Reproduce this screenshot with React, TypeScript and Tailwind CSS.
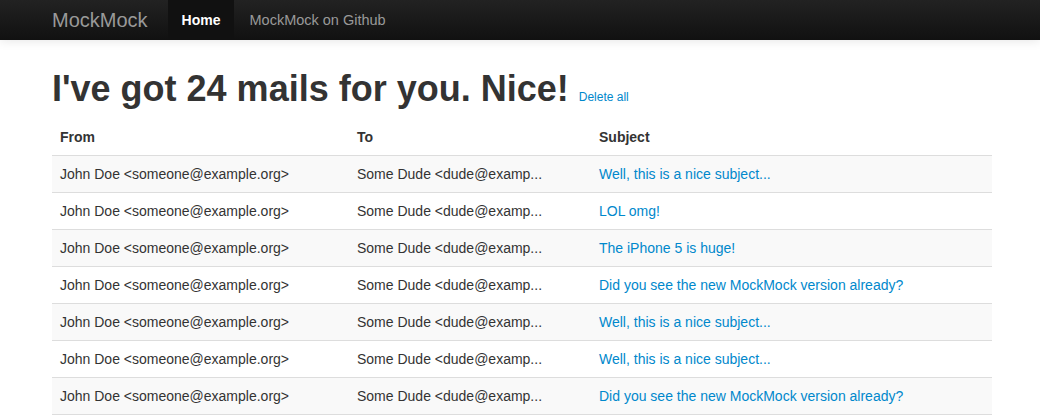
import React from "react";

const mails = [
  "Well, this is a nice subject...",
  "LOL omg!",
  "The iPhone 5 is huge!",
  "Did you see the new MockMock version already?",
  "Well, this is a nice subject...",
  "Well, this is a nice subject...",
  "Did you see the new MockMock version already?",
];

const App = () => {
  return (
    <div className="min-h-screen bg-white text-[14px] leading-5 text-[#333] font-['Liberation_Sans',Arial,sans-serif]">
      <div className="h-10 bg-gradient-to-b from-[#222222] to-[#111111] shadow-[0_1px_10px_rgba(0,0,0,0.1)]">
        <div className="ml-[52px] flex h-10 w-[940px] items-center">
          <a className="-ml-5 px-5 text-[20px] font-light leading-5 text-[#999]">MockMock</a>
          <a className="flex h-10 items-center bg-[#111] px-[14px] text-[14px] font-bold text-white [text-shadow:0_-1px_0_rgba(0,0,0,0.25)]">
            Home
          </a>
          <a className="px-[15px] text-[14.5px] text-[#999]">MockMock on Github</a>
        </div>
      </div>

      <div className="ml-[52px] w-[940px] pt-[29px]">
        <h1 className="mb-[10px] flex items-baseline gap-[10px] text-[36px] font-bold leading-10 text-[#333]">
          I've got 24 mails for you. Nice!
          <a className="text-[12px] font-normal leading-5 text-[#0088cc]">Delete all</a>
        </h1>

        <table className="w-full">
          <thead>
            <tr className="text-left">
              <th className="w-[297px] px-2 py-2 font-bold">From</th>
              <th className="w-[242px] px-2 py-2 font-bold">To</th>
              <th className="px-2 py-2 font-bold">Subject</th>
            </tr>
          </thead>
          <tbody>
            {mails.map((subject, i) => (
              <tr key={i} className={i % 2 === 0 ? "bg-[#f9f9f9]" : "bg-white"}>
                <td className="border-y border-[#ddd] px-2 py-2">John Doe &lt;someone@example.org&gt;</td>
                <td className="border-y border-[#ddd] px-2 py-2">Some Dude &lt;dude@examp...</td>
                <td className="border-y border-[#ddd] px-2 py-2">
                  <a className="text-[#0088cc]">{subject}</a>
                </td>
              </tr>
            ))}
          </tbody>
        </table>
      </div>
    </div>
  );
};

export default App;
